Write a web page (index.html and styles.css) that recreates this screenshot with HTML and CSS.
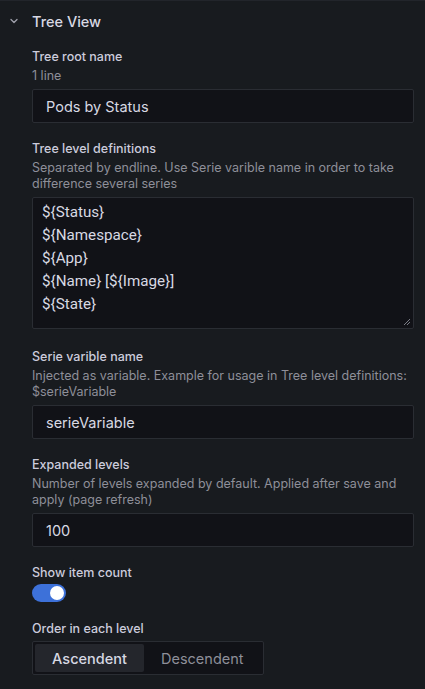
FILE: index.html
```html
<!DOCTYPE html>
<html>
<head>
<meta charset="utf-8">
<link rel="stylesheet" href="styles.css">
</head>
<body>
<div class="panel">
  <div class="header">
    <svg class="chev" width="12" height="12" viewBox="0 0 12 12"><path d="M3 4.5 L6 7.5 L9 4.5" fill="none" stroke="#9fa0ab" stroke-width="1.3" stroke-linecap="round" stroke-linejoin="round"/></svg>
    <span class="title">Tree View</span>
  </div>
  <div class="body">
    <div class="field">
      <div class="label">Tree root name</div>
      <div class="desc">1 line</div>
      <div class="input">Pods by Status</div>
    </div>
    <div class="field field-wide">
      <div class="label">Tree level definitions</div>
      <div class="desc">Separated by endline. Use Serie varible name in order to take difference several series</div>
      <div class="textarea">
        <div>${Status}</div>
        <div>${Namespace}</div>
        <div>${App}</div>
        <div>${Name} [${Image}]</div>
        <div>${State}</div>
        <svg class="grip" width="9" height="9" viewBox="0 0 9 9"><path d="M8 2 L2 8 M8 5 L5 8" stroke="#7b7d86" stroke-width="1"/></svg>
      </div>
    </div>
    <div class="field">
      <div class="label">Serie varible name</div>
      <div class="desc">Injected as variable. Example for usage in Tree level definitions: $serieVariable</div>
      <div class="input">serieVariable</div>
    </div>
    <div class="field">
      <div class="label">Expanded levels</div>
      <div class="desc">Number of levels expanded by default. Applied after save and apply (page refresh)</div>
      <div class="input">100</div>
    </div>
    <div class="field field-toggle">
      <div class="label">Show item count</div>
      <div class="toggle"><span class="knob"></span></div>
    </div>
    <div class="field">
      <div class="label">Order in each level</div>
      <div class="radio">
        <span class="opt active">Ascendent</span>
        <span class="opt">Descendent</span>
      </div>
    </div>
  </div>
</div>
</body>
</html>
```
FILE: styles.css
```css
* { box-sizing: border-box; }
html, body { margin: 0; padding: 0; background: #181b1f; }
body {
  font-family: Inter, "Noto Sans", sans-serif;
  color: #ccccdc;
  width: 425px;
  height: 689px;
  overflow: hidden;
}
.panel {
  border-top: 1px solid #22252b;
  padding-top: 1px;
}
.header {
  display: flex;
  align-items: center;
  height: 38px;
  padding-left: 8px;
}
.chev { margin-right: 12px; }
.title {
  font-size: 14.5px;
  font-weight: 500;
  color: #d8d9e3;
}
.body {
  padding: 9px 11px 0 32px;
}
.field { margin-bottom: 18px; }
.field-wide { margin-bottom: 20px; }
.field-toggle { margin-bottom: 19px; }
.label {
  font-size: 12.5px;
  font-weight: 500;
  line-height: 16px;
  color: #ccccdc;
  margin-bottom: 3px;
}
.desc {
  font-size: 12.5px;
  line-height: 16px;
  color: #8e8f99;
  margin-bottom: 5px;
}
.input {
  height: 34px;
  background: #111217;
  border: 1px solid #2a2d33;
  border-radius: 2px;
  padding: 0 13px;
  display: flex;
  align-items: center;
  font-size: 14.5px;
  color: #d8d9e3;
}
.textarea {
  position: relative;
  height: 132px;
  background: #111217;
  border: 1px solid #2a2d33;
  border-radius: 2px;
  padding: 3px 9px;
  font-family: Roboto, Inter, sans-serif;
  font-size: 15.2px;
  line-height: 23px;
  color: #d8d9e3;
}
.grip { position: absolute; right: 2px; bottom: 2px; }
.toggle {
  margin-top: 2px;
  width: 34px;
  height: 18px;
  border-radius: 9px;
  background: #3d71d9;
  position: relative;
}
.knob {
  position: absolute;
  right: 2px;
  top: 2px;
  width: 14px;
  height: 14px;
  border-radius: 50%;
  background: #ffffff;
}
.radio {
  margin-top: 1px;
  display: inline-flex;
  height: 34px;
  padding: 2px;
  border: 1px solid #2a2d33;
  border-radius: 2px;
  background: #111217;
}
.opt {
  display: flex;
  align-items: center;
  justify-content: center;
  font-size: 14.5px;
  color: #8e8f99;
  padding: 0 17px;
  border-radius: 2px;
}
.opt.active {
  width: 109px;
  background: #24262c;
  color: #d8d9e3;
  font-weight: 500;
}
```
